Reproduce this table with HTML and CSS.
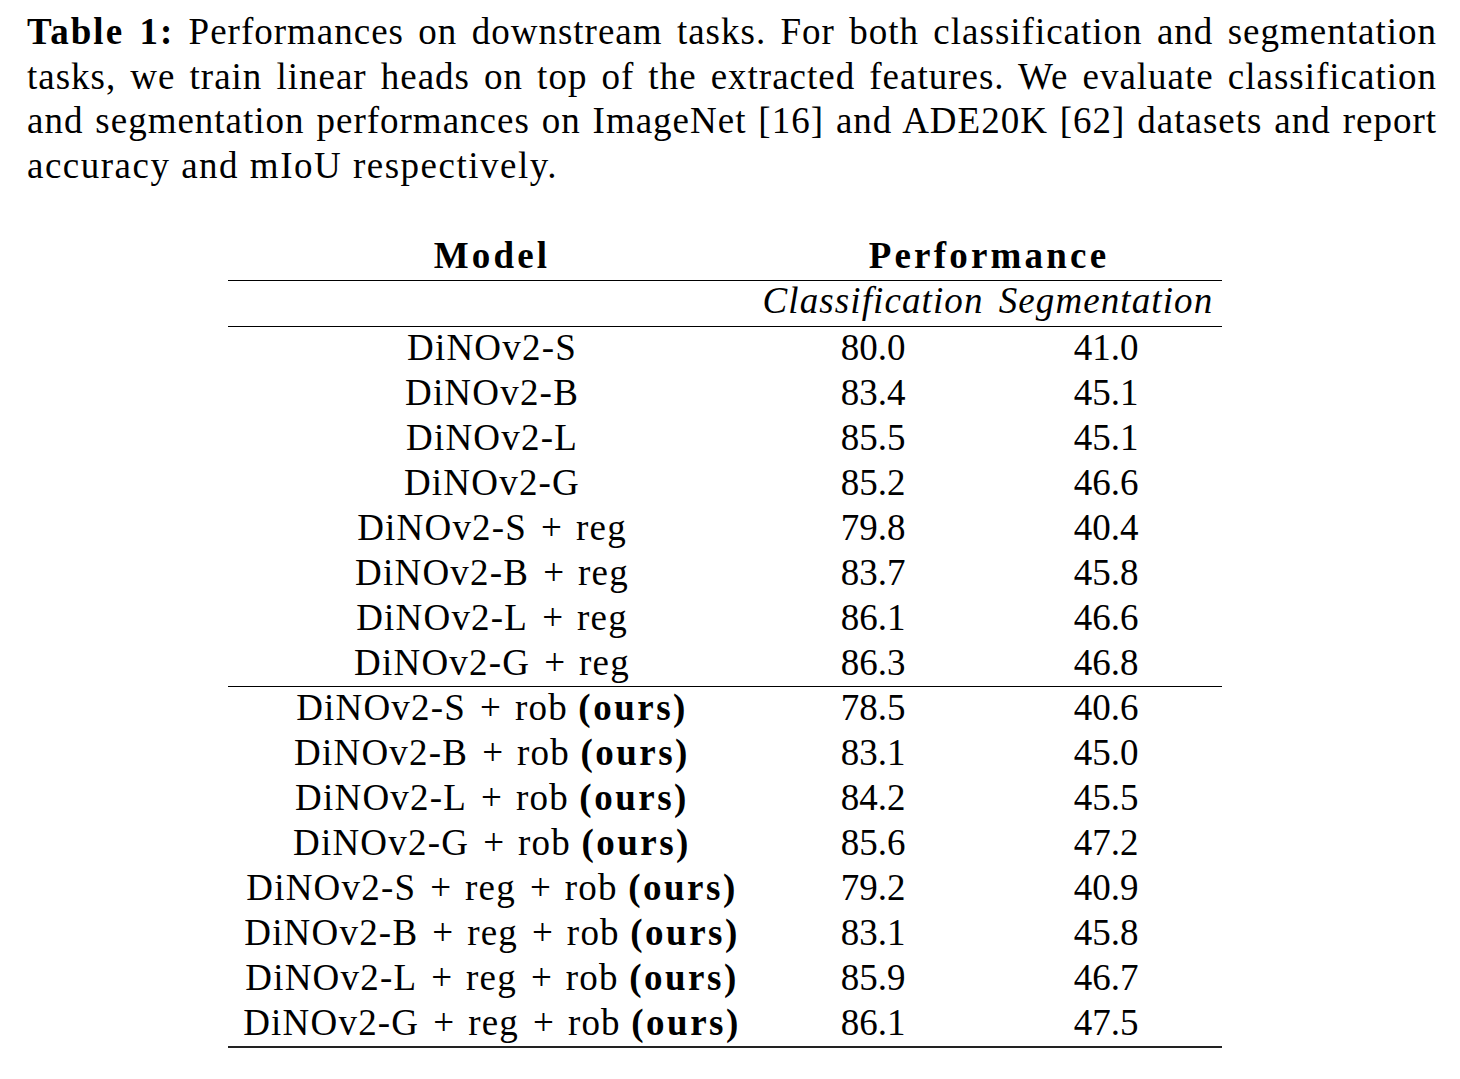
FILE: index.html
```html
<!DOCTYPE html>
<html>
<head>
<meta charset="utf-8">
<link rel="stylesheet" href="styles.css">
</head>
<body>
<div class="caption">
  <div class="cline just"><b>Table 1:</b> Performances on downstream tasks. For both classification and segmentation</div>
  <div class="cline just">tasks, we train linear heads on top of the extracted features. We evaluate classification</div>
  <div class="cline just">and segmentation performances on ImageNet [16] and ADE20K [62] datasets and report</div>
  <div class="cline last">accuracy and mIoU respectively.</div>
</div>

<div class="table">
  <div class="row">
    <div class="c1 bold">Model</div>
    <div class="span bold">Performance</div>
  </div>
  <div class="rule r-head"></div>
  <div class="row">
    <div class="c1"></div>
    <div class="c2 ital">Classification</div>
    <div class="c3 ital">Segmentation</div>
  </div>
  <div class="rule r-sub"></div>

  <div class="row"><div class="c1">DiNOv2-S</div><div class="c2">80.0</div><div class="c3">41.0</div></div>
  <div class="row"><div class="c1">DiNOv2-B</div><div class="c2">83.4</div><div class="c3">45.1</div></div>
  <div class="row"><div class="c1">DiNOv2-L</div><div class="c2">85.5</div><div class="c3">45.1</div></div>
  <div class="row"><div class="c1">DiNOv2-G</div><div class="c2">85.2</div><div class="c3">46.6</div></div>
  <div class="row"><div class="c1">DiNOv2-S<span class="op">+</span>reg</div><div class="c2">79.8</div><div class="c3">40.4</div></div>
  <div class="row"><div class="c1">DiNOv2-B<span class="op">+</span>reg</div><div class="c2">83.7</div><div class="c3">45.8</div></div>
  <div class="row"><div class="c1">DiNOv2-L<span class="op">+</span>reg</div><div class="c2">86.1</div><div class="c3">46.6</div></div>
  <div class="row"><div class="c1">DiNOv2-G<span class="op">+</span>reg</div><div class="c2">86.3</div><div class="c3">46.8</div></div>
  <div class="rule r-mid"></div>
  <div class="row"><div class="c1">DiNOv2-S<span class="op">+</span>rob <b>(ours)</b></div><div class="c2">78.5</div><div class="c3">40.6</div></div>
  <div class="row"><div class="c1">DiNOv2-B<span class="op">+</span>rob <b>(ours)</b></div><div class="c2">83.1</div><div class="c3">45.0</div></div>
  <div class="row"><div class="c1">DiNOv2-L<span class="op">+</span>rob <b>(ours)</b></div><div class="c2">84.2</div><div class="c3">45.5</div></div>
  <div class="row"><div class="c1">DiNOv2-G<span class="op">+</span>rob <b>(ours)</b></div><div class="c2">85.6</div><div class="c3">47.2</div></div>
  <div class="row"><div class="c1">DiNOv2-S<span class="op">+</span>reg<span class="op">+</span>rob <b>(ours)</b></div><div class="c2">79.2</div><div class="c3">40.9</div></div>
  <div class="row"><div class="c1">DiNOv2-B<span class="op">+</span>reg<span class="op">+</span>rob <b>(ours)</b></div><div class="c2">83.1</div><div class="c3">45.8</div></div>
  <div class="row"><div class="c1">DiNOv2-L<span class="op">+</span>reg<span class="op">+</span>rob <b>(ours)</b></div><div class="c2">85.9</div><div class="c3">46.7</div></div>
  <div class="row"><div class="c1">DiNOv2-G<span class="op">+</span>reg<span class="op">+</span>rob <b>(ours)</b></div><div class="c2">86.1</div><div class="c3">47.5</div></div>
  <div class="rule r-bot"></div>
</div>
</body>
</html>
```
FILE: styles.css
```css
html, body {
  margin: 0;
  padding: 0;
  background: #ffffff;
}

body {
  font-family: "Liberation Serif", "Times New Roman", serif;
  font-size: 37px;
  color: #000000;
  width: 1460px;
}

.caption {
  padding-top: 10px;
  margin-left: 27px;
  width: 1410px;
}

.cline {
  line-height: 44.5px;
  height: 44.5px;
  white-space: nowrap;
  letter-spacing: 1px;
}

.cline.last {
  letter-spacing: 1.5px;
}

.cline b {
  letter-spacing: 2px;
}

.cline.just {
  text-align: justify;
  text-align-last: justify;
  white-space: normal;
}

.table {
  margin-top: 43px;
  margin-left: 228px;
  width: 994px;
}

.row {
  display: grid;
  grid-template-columns: 528px 234px 232px;
  height: 45px;
  line-height: 49px;
  text-align: center;
  white-space: nowrap;
}

.c1 {
  letter-spacing: 1.2px;
}

.c1 b {
  letter-spacing: 2.5px;
}

.op {
  display: inline-block;
  margin: 0 14px;
  letter-spacing: 0;
}

.span {
  grid-column: 2 / 4;
}

.bold {
  font-weight: bold;
  letter-spacing: 3.2px;
}

.ital {
  font-style: italic;
  letter-spacing: 1.1px;
}

.rule {
  background: #000000;
  height: 1px;
}

.r-head {
  margin-top: 4px;
  margin-bottom: -5px;
}

.r-sub {
  margin-top: 5px;
  margin-bottom: -4px;
}

.r-mid {
  margin-top: 3px;
  margin-bottom: -4px;
}

.r-bot {
  margin-top: 3px;
  height: 2px;
  background: #222222;
}
```
